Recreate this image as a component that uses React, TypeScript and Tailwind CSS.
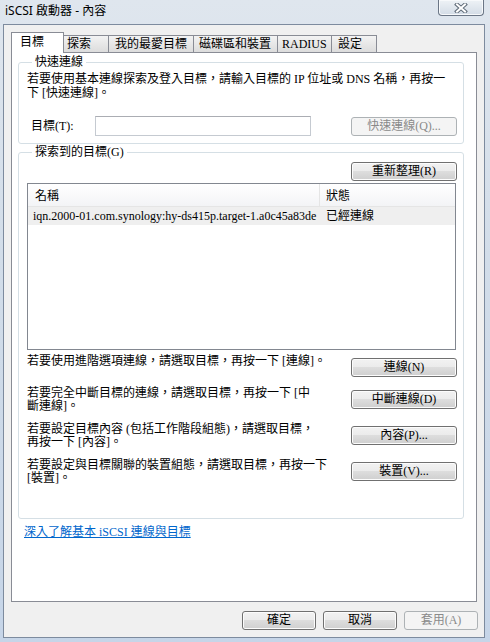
import React from 'react';

const cjk = "font-['Liberation_Serif','Noto_Sans_CJK_TC',serif]";

interface TabItem {
  name: string;
  cls: string;
}

const tabs: TabItem[] = [
  { name: '探索', cls: 'w-[45px] pl-[3px]' },
  { name: '我的最愛目標', cls: 'w-[85px] pl-[6px]' },
  { name: '磁碟區和裝置', cls: 'w-[84px] pl-[5px]' },
  { name: 'RADIUS', cls: 'w-[54px] pl-[4px]' },
  { name: '設定', cls: 'w-[45px] pl-[6px]' },
];

const actions = [
  { lines: ['若要使用進階選項連線，請選取目標，再按一下 [連線]。'], button: '連線(N)' },
  { lines: ['若要完全中斷目標的連線，請選取目標，再按一下 [中', '斷連線]。'], button: '中斷連線(D)' },
  { lines: ['若要設定目標內容 (包括工作階段組態)，請選取目標，', '再按一下 [內容]。'], button: '內容(P)...' },
  { lines: ['若要設定與目標關聯的裝置組態，請選取目標，再按一下', '[裝置]。'], button: '裝置(V)...' },
];

const WinButton = ({ label, width = 'w-[106px]', disabled = false }: { label: string; width?: string; disabled?: boolean }) => (
  <button
    type="button"
    className={`${width} h-[19px] shrink-0 flex items-center justify-center rounded-[3px] border text-[12px] leading-[13px] ${
      disabled
        ? 'border-[#adb2b5] bg-[#f4f4f4] text-[#8a8a8a]'
        : 'border-[#707070] bg-[linear-gradient(to_bottom,#f2f2f2_0%,#ebebeb_49%,#dddddd_50%,#cfcfcf_100%)] shadow-[inset_0_0_0_1px_#fcfcfc] text-black'
    }`}
  >
    {label}
  </button>
);

export default function App() {
  return (
    <div className={`relative w-[490px] h-[642px] overflow-hidden flex flex-col bg-[linear-gradient(to_bottom,#dfe6ee_0%,#d2dde9_40%,#c6d5e8_100%)] ${cjk} text-[12px] text-black`}>
      {/* Title bar */}
      <div className="h-[24px] shrink-0 pl-[5px] pt-[3px] font-['Noto_Sans','Noto_Sans_CJK_TC',sans-serif] text-[12px] leading-[15px] text-black">
        iSCSI 啟動器 - 內容
      </div>
      <div className="absolute top-0 right-[6px] w-[46px] h-[16px] rounded-b-[4px] border border-t-0 border-[#6b7686] bg-[linear-gradient(to_bottom,#eef2f6,#d3dce6)] shadow-[inset_0_0_0_1px_#f7f9fb] flex items-center justify-center">
        <svg width="14" height="10" viewBox="0 0 14 10">
          <path d="M3 1.5 L11 8.5 M11 1.5 L3 8.5" stroke="#5f6b78" strokeWidth="4" strokeLinecap="square" />
          <path d="M3 1.5 L11 8.5 M11 1.5 L3 8.5" stroke="#ffffff" strokeWidth="2" strokeLinecap="square" />
        </svg>
      </div>

      {/* Window body */}
      <div className="ml-[3px] w-[482px] h-[614px] border border-[#7d8b9e] bg-[#f0f0f0] flex flex-col">
        {/* Tabs */}
        <div className="ml-[7px] pt-[7px] flex items-end">
          <div className="relative z-10 -mb-px w-[53px] h-[21px] border border-b-0 border-[#898c95] bg-white pl-[8px] pt-[2px] leading-[14px]">
            目標
          </div>
          {tabs.map((t) => (
            <div
              key={t.name}
              className={`${t.cls} h-[17px] border-t border-r border-[#898c95] bg-[linear-gradient(to_bottom,#f3f3f3,#dcdcdc)] pt-[1px] leading-[14px] whitespace-nowrap`}
            >
              {t.name}
            </div>
          ))}
        </div>

        {/* Tab panel */}
        <div className="ml-[7px] w-[466px] h-[550px] border border-[#898c95] bg-white flex flex-col">
          {/* Quick connect */}
          <fieldset className="mt-[3px] ml-[6px] w-[446px] rounded-[3px] border border-[#d5dfe5] pl-[8px] pr-[6px] pb-[7px]">
            <legend className="ml-[5px] px-[3px] leading-[13px]">快速連線</legend>
            <div className="pt-[3px] leading-[14px] whitespace-nowrap">
              若要使用基本連線探索及登入目標，請輸入目標的 IP 位址或 DNS 名稱，再按一
              <br />下 [快速連線]。
            </div>
            <div className="mt-[16px] flex items-center">
              <span className="ml-[4px] w-[64px] leading-[13px]">目標(T):</span>
              <input
                className="w-[216px] h-[20px] border border-[#c5cad1] border-t-[#abadb3] bg-white outline-none"
                readOnly
              />
              <div className="ml-[40px]">
                <WinButton label="快速連線(Q)..." disabled />
              </div>
            </div>
          </fieldset>

          {/* Discovered targets */}
          <fieldset className="mt-[2px] ml-[6px] w-[446px] rounded-[3px] border border-[#d5dfe5] pl-[8px] pr-[6px] pb-[33px]">
            <legend className="ml-[5px] px-[3px] leading-[13px]">探索到的目標(G)</legend>
            <div className="mt-[3px] flex justify-end">
              <WinButton label="重新整理(R)" />
            </div>
            <div className="mt-[2px] w-[429px] h-[167px] border border-[#828790] bg-white flex flex-col">
              <div className="h-[23px] flex border-b border-[#e5e5e5] bg-[linear-gradient(to_bottom,#ffffff,#f3f4f6)] leading-[13px]">
                <div className="w-[292px] pl-[7px] pt-[6px] border-r border-[#e5e5e5]">名稱</div>
                <div className="pl-[6px] pt-[6px]">狀態</div>
              </div>
              <div className="h-[18px] flex items-center bg-[#efefef] leading-[13px] whitespace-nowrap">
                <div className="w-[293px] pl-[5px]">iqn.2000-01.com.synology:hy-ds415p.target-1.a0c45a83de</div>
                <div className="pl-[5px]">已經連線</div>
              </div>
            </div>
            <div className="mt-[5px] flex flex-col gap-[10px]">
              {actions.map((a) => (
                <div key={a.button} className="flex items-start justify-between">
                  <div className="leading-[13px] whitespace-nowrap">
                    {a.lines.map((l) => (
                      <div key={l}>{l}</div>
                    ))}
                  </div>
                  <div className="mt-[3px]">
                    <WinButton label={a.button} />
                  </div>
                </div>
              ))}
            </div>
          </fieldset>

          <a className="mt-[7px] ml-[12px] w-fit leading-[13px] text-[#0066cc] underline">
            深入了解基本 iSCSI 連線與目標
          </a>
        </div>

        {/* Dialog buttons */}
        <div className="mt-[9px] pr-[6px] flex justify-end gap-[7px]">
          <WinButton label="確定" width="w-[74px]" />
          <WinButton label="取消" width="w-[74px]" />
          <WinButton label="套用(A)" width="w-[74px]" disabled />
        </div>
      </div>
    </div>
  );
}
